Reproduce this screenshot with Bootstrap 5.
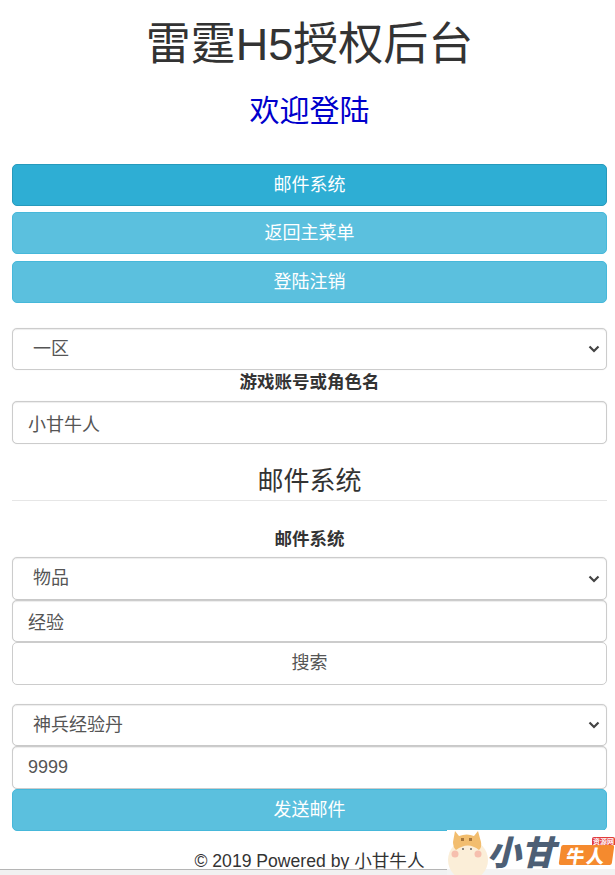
<!DOCTYPE html>
<html lang="zh-CN">
<head>
    <meta charset="UTF-8">
    <meta name="viewport" content="width=device-width, initial-scale=1.0">
    <title>雷霆H5授权后台</title>
    <link href="https://cdn.jsdelivr.net/npm/bootstrap@5.3.0/dist/css/bootstrap.min.css" rel="stylesheet">
    <style>
        html, body { height: 875px; overflow: hidden; }
        body {
            background: #fff;
            color: #333;
            font-family: "Liberation Sans", "Noto Sans CJK SC", sans-serif;
            font-size: 18px;
            position: relative;
        }
        .page-wrap { padding: 0 8px 0 12px; }
        .main-title { font-size: 45px; font-weight: 400; line-height: 50px; margin: 20px 0 0; color: #333; }
        .sub-title { font-size: 30px; font-weight: 400; line-height: 36px; margin: 23px 0 0; color: #0000cc; }
        .menu-btns { margin-top: 35px; display: flex; flex-direction: column; gap: 6px; }
        .menu-last { margin-top: 1px; }
        .btn-sky {
            background: #5bc0de;
            border: 1px solid #46b8da;
            color: #fff;
            font-size: 18px;
            height: 42px;
            line-height: 26px;
            padding: 7px 12px;
            border-radius: 5px;
        }
        .btn-sky:hover { background: #31b0d5; color: #fff; }
        .btn-sky.is-on { background: #2eaed4; border-color: #269abc; color: #fff; }
        .field {
            height: 42px;
            border: 1px solid #ccc;
            border-radius: 5px;
            font-size: 18px;
            color: #555;
            padding: 6px 15px;
            box-shadow: inset 0 1px 1px rgba(0, 0, 0, .075), 0 0 1px rgba(0, 0, 0, .15);
        }
        .field-tall { height: 43px; }
        select.field {
            padding-left: 20px;
            background-image: url("data:image/svg+xml,%3csvg xmlns='http://www.w3.org/2000/svg' viewBox='0 0 12 8'%3e%3cpath fill='none' stroke='%23444' stroke-width='2.2' d='M1.5 1.5 6 6l4.5-4.5'/%3e%3c/svg%3e");
            background-position: right 6px center;
            background-size: 12px 8px;
        }
        .btn-search {
            background: #fff;
            border: 1px solid #ccc;
            border-radius: 5px;
            height: 43px;
            color: #555;
            font-size: 18px;
            padding: 6px 12px;
        }
        .field-label { font-weight: 700; font-size: 17.5px; line-height: 24px; text-align: center; color: #333; }
        .label-account { margin-bottom: 7px; }
        .label-mail { margin: 26px 0 6px; }
        .form-block { margin-top: 25px; }
        .send-group { margin-top: 19px; }
        .section-title {
            font-size: 26px;
            font-weight: 400;
            line-height: 32px;
            text-align: center;
            margin: 21px 0 0;
            padding-bottom: 3px;
            border-bottom: 1px solid #e6e6e6;
            color: #333;
        }
        .page-foot { text-align: center; font-size: 17.6px; line-height: 24px; margin-top: 18px; color: #333; }
        .bottom-bar {
            position: absolute;
            left: 0; right: 0; bottom: 0;
            height: 6px;
            background: #f1f1f1;
            border-top: 1px solid #b5b5b5;
        }
        .brand-mark {
            position: absolute;
            right: 0; bottom: 0;
            width: 168px;
            height: 45px;
            background: linear-gradient(#fff 39px, #f3f3f3 39px);
        }
        .brand-mark svg { position: absolute; left: 0; top: 0; }
        .brand-name {
            position: absolute;
            left: 40px; top: 1px;
            font-size: 34px;
            line-height: 40px;
            font-weight: 900;
            font-style: italic;
            color: #4d5f75;
            font-family: "Noto Sans CJK SC", sans-serif;
        }
        .brand-tag {
            position: absolute;
            left: 113px; top: 15px;
            width: 53px; height: 20px;
            background: #f58a2e;
            border-radius: 2px;
            transform: skewX(-8deg);
            color: #fff;
            font-size: 18px;
            line-height: 20px;
            font-weight: 900;
            text-align: center;
            letter-spacing: 2px;
            font-family: "Noto Sans CJK SC", sans-serif;
        }
        .brand-flag {
            position: absolute;
            left: 145px; top: 7px;
            width: 23px; height: 8px;
            background: #e23b3b;
            border-radius: 2px 2px 0 0;
            color: #fff;
            font-size: 7px;
            line-height: 8px;
            font-weight: 700;
            text-align: center;
            font-family: "Noto Sans CJK SC", sans-serif;
        }
    </style>
</head>
<body>
    <div class="page-wrap">
        <h1 class="main-title text-center">雷霆H5授权后台</h1>
        <h2 class="sub-title text-center">欢迎登陆</h2>

        <div class="menu-btns">
            <button class="btn btn-sky is-on w-100" type="button">邮件系统</button>
            <button class="btn btn-sky w-100" type="button">返回主菜单</button>
            <button class="btn btn-sky menu-last w-100" type="button">登陆注销</button>
        </div>

        <form class="form-block">
            <select class="form-select field">
                <option>一区</option>
            </select>
            <div class="field-label label-account">游戏账号或角色名</div>
            <input class="form-control field field-tall" type="text" value="小甘牛人">

            <h3 class="section-title">邮件系统</h3>
            <div class="field-label label-mail">邮件系统</div>

            <div class="d-flex flex-column">
                <select class="form-select field field-tall">
                    <option>物品</option>
                </select>
                <input class="form-control field" type="text" value="经验">
                <button class="btn-search w-100" type="button">搜索</button>
            </div>

            <div class="d-flex flex-column send-group">
                <select class="form-select field">
                    <option>神兵经验丹</option>
                </select>
                <input class="form-control field field-tall" type="text" value="9999">
                <button class="btn btn-sky w-100" type="button">发送邮件</button>
            </div>
        </form>

        <div class="page-foot">© 2019 Powered by 小甘牛人</div>
    </div>

    <div class="bottom-bar"></div>

    <div class="brand-mark">
        <svg width="42" height="45" viewBox="0 0 42 45">
            <circle cx="21" cy="30" r="20" fill="#fbeed8"/>
            <path d="M8 1 L12 6 Q20 3 27 6 L31 1 L34 12 Q35 17 32 20 Q21 11 9 20 Q6 17 6 12 Z" fill="#f2bd6e"/>
            <circle cx="8" cy="24" r="3.5" fill="#f6bfae"/>
            <circle cx="31" cy="24" r="3.5" fill="#f6bfae"/>
            <circle cx="16" cy="19" r="1" fill="#666"/>
            <circle cx="24" cy="19" r="1" fill="#666"/>
            <path d="M14 8 h3 v3 h-3 z M22 8 h3 v3 h-3 z" fill="#a5743a"/>
        </svg>
        <div class="brand-name">小甘</div>
        <div class="brand-tag">牛人</div>
        <div class="brand-flag">资源网</div>
    </div>

    <script src="https://cdn.jsdelivr.net/npm/bootstrap@5.3.0/dist/js/bootstrap.bundle.min.js"></script>
</body>
</html>
